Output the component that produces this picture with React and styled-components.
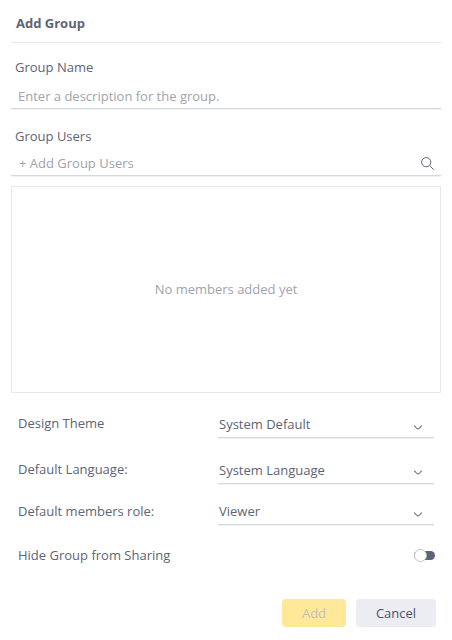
import React, { useState } from 'react';
import styled, { createGlobalStyle } from 'styled-components';

const settings = [
  { label: 'Design Theme', value: 'System Default', height: 46, offset: 1, arrow: 2 },
  { label: 'Default Language:', value: 'System Language', height: 42, offset: 1, arrow: 1 },
  { label: 'Default members role:', value: 'Viewer', height: 44, offset: 0, arrow: 2 },
];

export default function App() {
  const [name, setName] = useState('');
  const [users, setUsers] = useState('');
  const [hidden, setHidden] = useState(false);

  return (
    <>
      <GlobalStyle />
      <Dialog>
        <Header>Add Group</Header>

        <Label $top={15}>Group Name</Label>
        <Field $gap={11} $pad={7}>
          <Input
            value={name}
            placeholder='Enter a description for the group.'
            onChange={(e) => setName(e.target.value)}
          />
        </Field>

        <Label $top={18}>Group Users</Label>
        <Field $gap={9} $pad={8}>
          <Input
            value={users}
            placeholder='+ Add Group Users'
            onChange={(e) => setUsers(e.target.value)}
          />
          <SearchIcon viewBox='0 0 13 13'>
            <circle cx='5.2' cy='5.2' r='4.6' />
            <path d='M8.5 8.5L12.7 12.7' />
          </SearchIcon>
        </Field>

        <Members>No members added yet</Members>

        <Settings>
          {settings.map(({ label, value, height, offset, arrow }) => (
            <Row key={label} $height={height}>
              <span>{label}</span>
              <Select $offset={offset}>
                <span>{value}</span>
                <Chevron viewBox='0 0 8 5' $top={arrow}>
                  <path d='M0.3 0.6Q3 4 4 4Q5 4 7.7 0.6' />
                </Chevron>
              </Select>
            </Row>
          ))}
          <Row $height={53}>
            <span>Hide Group from Sharing</span>
            <Toggle
              type='button'
              role='switch'
              aria-checked={hidden}
              $on={hidden}
              onClick={() => setHidden(!hidden)}
            />
          </Row>
        </Settings>

        <Footer>
          <Button $width={64} $bg='#ffe999' $color='#bfbfb4' disabled>Add</Button>
          <Button $width={80} $bg='#ecedf2' $color='#4b5265'>Cancel</Button>
        </Footer>
      </Dialog>
    </>
  );
}

const GlobalStyle = createGlobalStyle`
  * {
    box-sizing: border-box;
  }
  body {
    margin: 0;
    background-color: #fff;
    color: #5d6475;
    font-family: "Open Sans", "Noto Sans", sans-serif;
    font-size: 13px;
    line-height: 18px;
  }
`;

const Dialog = styled.div`
  width: 452px;
  height: 640px;
  padding: 0 11px;
  overflow: hidden;
`;

const Header = styled.div`
  height: 43px;
  padding: 14px 5px 0;
  border-bottom: 1px solid #e6e7ea;
  font-weight: 700;
`;

const Label = styled.div`
  margin-top: ${({ $top }) => $top}px;
  padding-left: 4px;
`;

const Field = styled.div`
  display: flex;
  align-items: flex-start;
  margin-top: ${({ $gap }) => $gap}px;
  padding: 0 7px 3px ${({ $pad }) => $pad}px;
  border-bottom: 1px solid #d4d6e0;
  box-shadow: 0 1px 0 #f1f2f6;
`;

const Input = styled.input`
  flex: 1;
  height: 18px;
  padding: 0;
  border: none;
  outline: none;
  background: transparent;
  color: inherit;
  font: inherit;
  &::placeholder {
    color: #a0a3ad;
    opacity: 1;
  }
`;

const SearchIcon = styled.svg`
  width: 13px;
  height: 13px;
  margin-top: 3px;
  fill: none;
  stroke: #5d6475;
  stroke-width: 1;
`;

const Members = styled.div`
  display: flex;
  align-items: center;
  justify-content: center;
  height: 207px;
  margin-top: 10px;
  padding-bottom: 1px;
  border: 1px solid #e6e7ea;
  color: #a0a3ad;
`;

const Settings = styled.div`
  padding: 21px 7px 0;
`;

const Row = styled.div`
  display: flex;
  align-items: flex-start;
  justify-content: space-between;
  height: ${({ $height }) => $height}px;
`;

const Select = styled.div`
  display: flex;
  justify-content: space-between;
  width: 216px;
  height: 23px;
  margin-top: ${({ $offset }) => $offset}px;
  padding: 0 12px 0 1px;
  border-bottom: 1px solid #d4d6e0;
  box-shadow: 0 1px 0 #f1f2f6;
`;

const Chevron = styled.svg`
  width: 8px;
  height: 5px;
  margin-top: ${({ $top }) => $top + 8}px;
  fill: none;
  stroke: #5d6475;
  stroke-width: 1.1;
`;

const Toggle = styled.button`
  display: flex;
  align-items: center;
  justify-content: ${({ $on }) => ($on ? 'flex-end' : 'flex-start')};
  width: 21px;
  height: 9px;
  margin: 5px -1px 0 0;
  padding: 0;
  border: none;
  border-radius: 5px;
  background-color: #5d6475;
  cursor: pointer;
  &::before {
    content: '';
    flex: none;
    width: 11px;
    height: 11px;
    border: 1px solid #c3c5cc;
    border-radius: 50%;
    background-color: #fff;
  }
`;

const Footer = styled.div`
  display: flex;
  justify-content: flex-end;
  gap: 10px;
  padding-right: 5px;
`;

const Button = styled.button`
  width: ${({ $width }) => $width}px;
  height: 28px;
  padding: 0;
  border: none;
  border-radius: 4px;
  background-color: ${({ $bg }) => $bg};
  color: ${({ $color }) => $color};
  font: inherit;
`;
